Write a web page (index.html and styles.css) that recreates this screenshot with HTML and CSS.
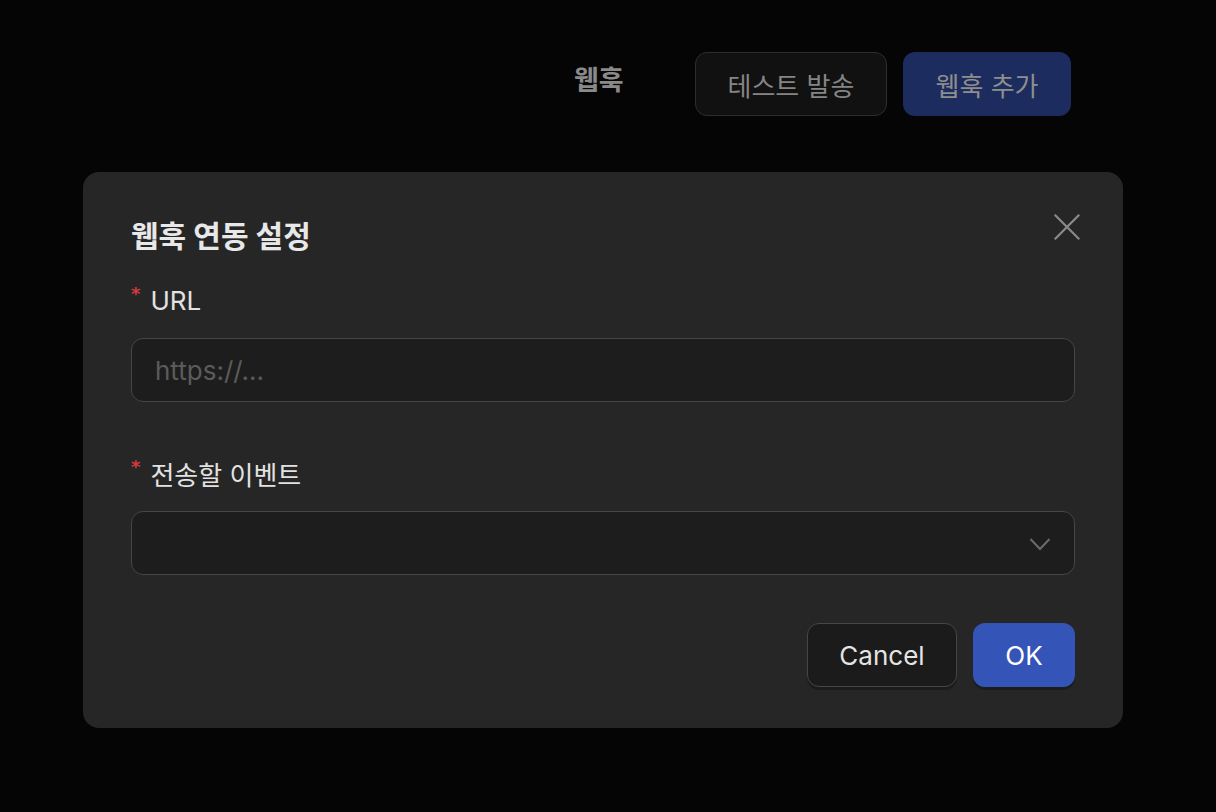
FILE: index.html
```html
<!DOCTYPE html>
<html lang="ko">
<head>
<meta charset="utf-8">
<title>웹훅</title>
<link rel="stylesheet" href="styles.css">
</head>
<body>
<div class="page">
  <header class="topbar">
    <h1 class="topbar-title">웹훅</h1>
    <div class="topbar-actions">
      <button class="btn btn-dim">테스트 발송</button>
      <button class="btn btn-dim-primary">웹훅 추가</button>
    </div>
  </header>

  <section class="modal">
    <button class="modal-close" aria-label="close">
      <svg width="26" height="26" viewBox="0 0 26 26"><path d="M1.5 1.5 L24.5 24.5 M24.5 1.5 L1.5 24.5" stroke="#8a8a8a" stroke-width="2.2" stroke-linecap="square" fill="none"/></svg>
    </button>
    <h2 class="modal-title">웹훅 연동 설정</h2>

    <div class="field">
      <label class="field-label"><span class="req">*</span>URL</label>
      <div class="control"><span class="placeholder">https://...</span></div>
    </div>

    <div class="field field-second">
      <label class="field-label"><span class="req">*</span>전송할 이벤트</label>
      <div class="control control-select">
        <svg class="chevron" width="22" height="14" viewBox="0 0 22 14"><path d="M1.5 2 L11 12 L20.5 2" stroke="#6b6b6b" stroke-width="2" fill="none"/></svg>
      </div>
    </div>

    <div class="modal-footer">
      <button class="btn btn-cancel">Cancel</button>
      <button class="btn btn-ok">OK</button>
    </div>
  </section>
</div>
</body>
</html>
```

FILE: styles.css
```css
* { box-sizing: border-box; }
html, body { margin: 0; padding: 0; }
body {
  background: #050505;
  font-family: "Inter", "Noto Sans CJK KR", sans-serif;
  width: 1216px;
  height: 812px;
  overflow: hidden;
}
.page { padding-top: 52px; }

.topbar {
  display: flex;
  align-items: center;
  padding-left: 574px;
  height: 64px;
}
.topbar-title {
  width: 121px;
  margin: 0;
  font-size: 27px;
  font-weight: 700;
  color: #8a8a8a;
  line-height: 1;
  position: relative;
  top: -4px;
}
.topbar-actions { display: flex; gap: 16px; }

.btn {
  font-family: "Inter", "Noto Sans CJK KR", sans-serif;
  font-size: 26px;
  height: 64px;
  border-radius: 12px;
  padding: 0;
  cursor: pointer;
  display: flex;
  align-items: center;
  justify-content: center;
}
.btn-dim {
  width: 192px;
  background: #111111;
  border: 1.5px solid #2e2e2e;
  color: #858585;
}
.btn-dim-primary {
  width: 168px;
  background: #1c2c5e;
  border: none;
  color: #8e8e8e;
}

.modal {
  position: relative;
  margin: 56px 0 0 83px;
  width: 1040px;
  height: 556px;
  background: #262626;
  border-radius: 16px;
  padding: 46px 48px 40px;
}
.modal-close {
  position: absolute;
  top: 42px;
  right: 43px;
  width: 26px;
  height: 26px;
  padding: 0;
  border: none;
  background: none;
  display: flex;
}
.modal-title {
  margin: 0;
  font-size: 30px;
  font-weight: 700;
  line-height: 36px;
  color: #e8e8e8;
}

.field { margin-top: 28px; }
.field-second { margin-top: 53px; }
.field-label {
  display: flex;
  align-items: center;
  height: 36px;
  font-size: 26px;
  color: #e2e2e2;
  margin-bottom: 20px;
}
.req {
  color: #d43a3d;
  font-size: 18px;
  font-weight: 700;
  margin-right: 10px;
  position: relative;
  top: -7px;
  font-family: "DejaVu Sans", sans-serif;
}
.control {
  height: 64px;
  border: 1.5px solid #464646;
  border-radius: 12px;
  background: #1d1d1d;
  display: flex;
  align-items: center;
  padding: 0 23px;
}
.placeholder {
  font-size: 26px;
  color: #5b5b5b;
}
.control-select { justify-content: flex-end; padding-right: 23px; }
.chevron { margin-top: 2px; }

.modal-footer {
  display: flex;
  justify-content: flex-end;
  gap: 16px;
  margin-top: 48px;
}
.btn-cancel {
  width: 150px;
  background: #1b1b1b;
  border: 1.5px solid #464646;
  color: #e4e4e4;
  box-shadow: 0 3px 0 rgba(0, 0, 0, 0.25);
}
.btn-ok {
  width: 102px;
  background: #3454b7;
  border: none;
  color: #ffffff;
  box-shadow: 0 3px 0 rgba(0, 0, 0, 0.25);
}
```
